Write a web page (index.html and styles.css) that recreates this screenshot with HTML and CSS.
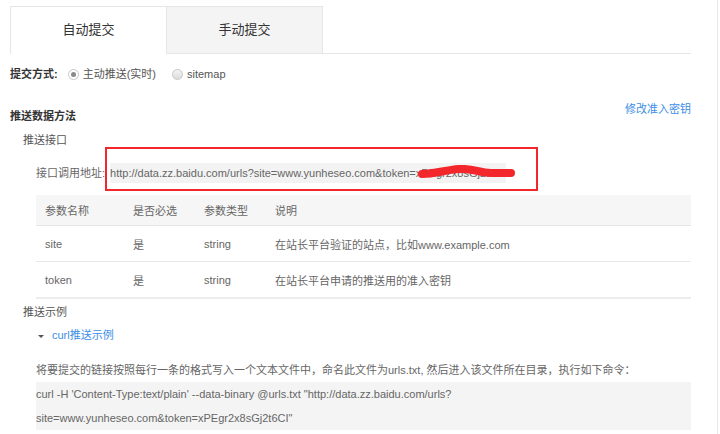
FILE: index.html
```html
<!DOCTYPE html>
<html lang="zh-CN">
<head>
    <meta charset="UTF-8">
    <meta name="viewport" content="width=device-width, initial-scale=1.0">
    <title>链接提交</title>
    <link rel="stylesheet" href="styles.css">
</head>
<body>
    <div class="page">
        <!-- Tabs -->
        <div class="tabs">
            <div class="tab active">自动提交</div>
            <div class="tab">手动提交</div>
        </div>

        <div class="mode">
            <b class="mode-label">提交方式:</b>
            <label class="radio checked"><i></i>主动推送(实时)</label>
            <label class="radio"><i></i>sitemap</label>
        </div>

        <div class="section-head">
            <h3>推送数据方法</h3>
            <a class="link" href="#">修改准入密钥</a>
        </div>

        <div class="sub">推送接口</div>

        <div class="addr">
            <span class="addr-label">接口调用地址:</span>
            <span class="addr-box">
                <span class="addr-url">http://data.zz.baidu.com/urls?site=www.yunheseo.com&amp;token=x<span class="redacted">PEgr2x8sGj2t6CI<svg class="blob" width="98" height="16" viewBox="0 0 98 16"><path d="M5 9 C 18 9, 28 5, 42 4 C 56 3, 62 8, 74 8 C 82 8, 90 8, 94 8" fill="none" stroke="#f2262b" stroke-width="8" stroke-linecap="round"/></svg></span></span>
            </span>
        </div>

        <table class="params">
            <thead>
                <tr>
                    <th class="c1">参数名称</th>
                    <th class="c2">是否必选</th>
                    <th class="c3">参数类型</th>
                    <th>说明</th>
                </tr>
            </thead>
            <tbody>
                <tr>
                    <td>site</td>
                    <td>是</td>
                    <td>string</td>
                    <td>在站长平台验证的站点，比如www.example.com</td>
                </tr>
                <tr>
                    <td>token</td>
                    <td>是</td>
                    <td>string</td>
                    <td>在站长平台申请的推送用的准入密钥</td>
                </tr>
            </tbody>
        </table>

        <div class="sub sub-example">推送示例</div>

        <div class="toggle"><span class="caret"></span><span class="link">curl推送示例</span></div>

        <p class="desc">将要提交的链接按照每行一条的格式写入一个文本文件中，命名此文件为urls.txt, 然后进入该文件所在目录，执行如下命令：</p>

        <div class="code">curl -H 'Content-Type:text/plain' --data-binary @urls.txt "http://data.zz.baidu.com/urls?<br>site=www.yunheseo.com&amp;token=xPEgr2x8sGj2t6CI"</div>
    </div>
</body>
</html>
```

FILE: styles.css
```css
body {
    margin: 0;
    background: #fff;
    color: #666;
    font-family: "Liberation Sans", "Noto Sans CJK SC", sans-serif;
    font-size: 11px;
}

.page {
    width: 718px;
    min-height: 434px;
    box-sizing: border-box;
    padding: 6px 0 0 10px;
    border-right: 1px solid #e8e8e8;
}

/* Tabs */
.tabs {
    display: flex;
    width: 681px;
    height: 47px;
    border-bottom: 1px solid #e6e6e6;
}

.tab {
    width: 157px;
    height: 47px;
    box-sizing: border-box;
    border: 1px solid #e6e6e6;
    border-bottom: none;
    background: #f4f4f4;
    color: #333;
    font-size: 13px;
    line-height: 46px;
    text-align: center;
}

.tab + .tab {
    margin-left: -1px;
}

.tab.active {
    background: #fff;
    height: 48px;
    position: relative;
    z-index: 1;
}

/* Submit mode */
.mode {
    display: flex;
    align-items: center;
    margin-top: 10px;
    height: 20px;
    line-height: 20px;
}

.mode-label {
    color: #333;
    margin-right: 10px;
}

.radio {
    display: flex;
    align-items: center;
    color: #555;
    margin-right: 16px;
}

.radio i {
    width: 9px;
    height: 9px;
    border: 1px solid #c8c8c8;
    border-radius: 50%;
    background: linear-gradient(#f4f4f4, #dcdcdc);
    margin-right: 4px;
    position: relative;
}

.radio.checked i {
    background: #fff;
}

.radio.checked i::after {
    content: "";
    position: absolute;
    left: 2px;
    top: 2px;
    width: 5px;
    height: 5px;
    border-radius: 50%;
    background: #8a8a8a;
}

/* Section head */
.section-head {
    display: flex;
    justify-content: space-between;
    align-items: flex-start;
    width: 681px;
    margin-top: 15px;
}

.section-head h3 {
    margin: 0;
    padding-top: 7px;
    font-size: 11px;
    line-height: 20px;
    color: #333;
}

.link {
    color: #3b8ee5;
    text-decoration: none;
    line-height: 20px;
}

.sub {
    margin-top: 6px;
    padding-left: 13px;
    line-height: 16px;
    color: #555;
}

/* Address */
.addr {
    display: flex;
    align-items: flex-end;
    margin: -1px 0 0 26px;
}

.addr-label {
    line-height: 20px;
    margin-bottom: 8px;
    white-space: nowrap;
}

.addr-box {
    width: 433px;
    box-sizing: border-box;
    border: 2px solid #f2262b;
    padding: 14px 0 6px 3px;
    white-space: nowrap;
}

.addr-url {
    display: inline-block;
    line-height: 20px;
    background: #f3f3f3;
}

.redacted {
    position: relative;
}

.blob {
    position: absolute;
    left: -4px;
    top: -2px;
}

/* Params table */
.params {
    width: 655px;
    margin: 4px 0 0 26px;
    border-collapse: collapse;
    text-align: left;
}

.params th,
.params td {
    padding: 0 0 0 9px;
    font-weight: normal;
    color: #666;
}

.params th {
    height: 30px;
    background: #f6f6f6;
    border-bottom: 1px solid #e6e6e6;
}

.params td {
    height: 35px;
    border-bottom: 1px solid #e8e8e8;
}

.params tbody tr:last-child td {
    border-bottom: 2px solid #ececec;
}

.params .c1 { width: 79px; }
.params .c2 { width: 62px; }
.params .c3 { width: 62px; }

.sub-example {
    margin-top: 5px;
}

/* curl example */
.toggle {
    display: flex;
    align-items: center;
    margin-top: 5px;
    padding-left: 28px;
    line-height: 20px;
}

.caret {
    width: 0;
    height: 0;
    border-left: 3px solid transparent;
    border-right: 3px solid transparent;
    border-top: 3px solid #555;
    margin: 3px 8px 0 0;
}

.desc {
    margin: 15px 0 0 26px;
    line-height: 20px;
}

.code {
    width: 655px;
    margin: 2px 0 0 26px;
    background: #f4f4f4;
    line-height: 24px;
}
```
